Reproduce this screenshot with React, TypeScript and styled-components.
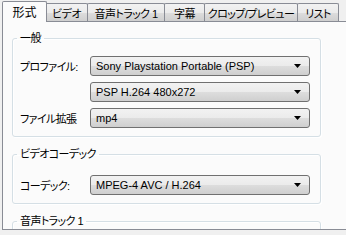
import styled, { createGlobalStyle, css } from "styled-components";

const GlobalStyle = createGlobalStyle`
  html, body {
    margin: 0;
    padding: 0;
    background: #f0f0f0;
  }
`;

type TabItem = { label: string; w: number };

const tabs: TabItem[] = [
  { label: "形式", w: 45 },
  { label: "ビデオ", w: 43 },
  { label: "音声トラック 1", w: 78 },
  { label: "字幕", w: 41 },
  { label: "クロップ/プレビュー", w: 94 },
  { label: "リスト", w: 42 },
];

function Arrow() {
  return (
    <svg width="7" height="4" viewBox="0 0 7 4">
      <path d="M0 0H7L3.5 4Z" fill="#000" />
    </svg>
  );
}

function Combo({ value }: { value: string }) {
  return (
    <ComboBox>
      <span>{value}</span>
      <Arrow />
    </ComboBox>
  );
}

export default function App() {
  return (
    <Frame>
      <GlobalStyle />
      <TabBar>
        {tabs.map((t, i) => (
          <Tab key={t.label} $w={t.w} $active={i === 0}>
            {t.label}
          </Tab>
        ))}
      </TabBar>
      <Panel>
        <Group $top={11}>
          <Legend>一般</Legend>
          <Row>
            <Label>プロファイル:</Label>
            <Combo value="Sony Playstation Portable (PSP)" />
          </Row>
          <Row>
            <Label />
            <Combo value="PSP H.264 480x272" />
          </Row>
          <Row>
            <Label>ファイル拡張</Label>
            <Combo value="mp4" />
          </Row>
        </Group>
        <Group $top={14}>
          <Legend>ビデオコーデック</Legend>
          <Row>
            <Label>コーデック:</Label>
            <Combo value="MPEG-4 AVC / H.264" />
          </Row>
        </Group>
        <Group $top={14} $minH={60}>
          <Legend>音声トラック 1</Legend>
        </Group>
      </Panel>
    </Frame>
  );
}

const Frame = styled.div`
  width: 346px;
  height: 235px;
  overflow: hidden;
  background: #f0f0f0;
  font-family: "Liberation Sans", "Noto Sans CJK JP", sans-serif;
  font-size: 11px;
  color: #000;
  font-feature-settings: "palt";
`;

const TabBar = styled.div`
  display: flex;
  align-items: flex-end;
  height: 22px;
  padding-left: 2px;
  position: relative;
  z-index: 1;
`;

const Tab = styled.div<{ $active?: boolean; $w: number }>`
  box-sizing: border-box;
  width: ${(p) => p.$w}px;
  height: 18px;
  margin-bottom: 1px;
  margin-left: -1px;
  border: 1px solid #898c95;
  border-bottom: none;
  border-radius: 2px 2px 0 0;
  background: linear-gradient(#f2f2f2 0%, #ebebeb 50%, #dddddd 51%, #cfcfcf 100%);
  display: flex;
  align-items: center;
  justify-content: center;
  font-size: 11px;
  letter-spacing: -0.6px;
  white-space: nowrap;
  &:first-child {
    margin-left: 0;
  }
  ${(p) =>
    p.$active &&
    css`
      height: 21px;
      margin-bottom: 0;
      margin-right: -1px;
      padding-bottom: 1px;
      font-size: 12px;
      letter-spacing: 0;
      background: #fbfbfb;
      position: relative;
      z-index: 2;
    `}
`;

const Panel = styled.div`
  box-sizing: border-box;
  width: 360px;
  height: 209px;
  margin: -1px 0 0 2px;
  border: 1px solid #898c95;
  background: #fbfbfb;
  padding: 9px 0 0 9px;
  overflow: hidden;
  display: flex;
  flex-direction: column;
  gap: 10px;
`;

const Group = styled.fieldset<{ $top: number; $minH?: number }>`
  box-sizing: border-box;
  flex: none;
  width: 309px;
  min-width: 0;
  min-height: ${(p) => p.$minH ?? 0}px;
  margin: 0;
  padding: ${(p) => p.$top}px 10px 8px 7px;
  border: 1px solid #d5dfe5;
  border-radius: 3px;
  box-shadow: inset 1px 1px 0 #fff, 1px 1px 0 #fff;
  display: flex;
  flex-direction: column;
  gap: 6px;
`;

const Legend = styled.legend`
  padding: 0 3px;
  margin-left: -3px;
  font-size: 11px;
  line-height: 14px;
  letter-spacing: -0.6px;
`;

const Row = styled.div`
  display: grid;
  grid-template-columns: 70px 220px;
  align-items: center;
`;

const Label = styled.div`
  font-size: 11px;
  letter-spacing: -0.6px;
  white-space: nowrap;
`;

const ComboBox = styled.div`
  box-sizing: border-box;
  height: 20px;
  border: 1px solid #707070;
  border-radius: 3px;
  background: linear-gradient(#f2f2f2 0%, #ebebeb 50%, #dddddd 51%, #cfcfcf 100%);
  padding: 0 8px 0 5px;
  display: flex;
  align-items: center;
  justify-content: space-between;
  font-size: 11px;
  white-space: nowrap;
`;
